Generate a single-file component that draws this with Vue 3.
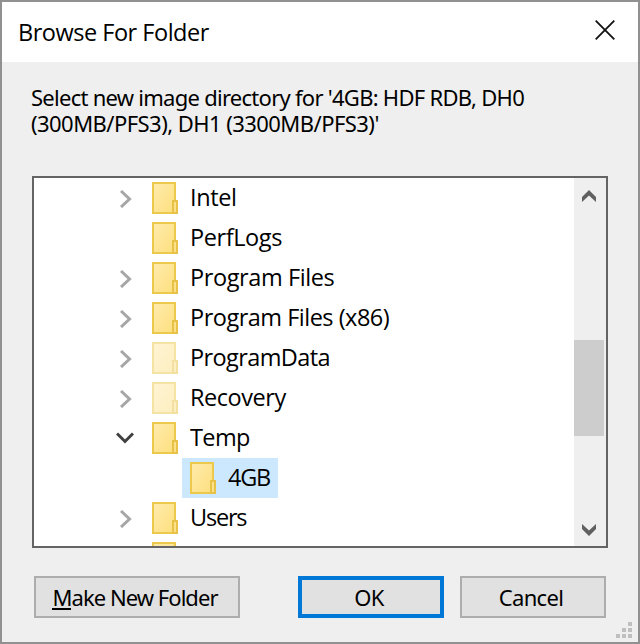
<script setup>
const rows = [
  { name: 'Intel', state: 'closed', spacing: -0.4 },
  { name: 'PerfLogs', state: 'leaf', spacing: -0.4 },
  { name: 'Program Files', state: 'closed', spacing: -0.4 },
  { name: 'Program Files (x86)', state: 'closed', spacing: -0.5 },
  { name: 'ProgramData', state: 'closed', hidden: true, spacing: -0.6 },
  { name: 'Recovery', state: 'closed', hidden: true, spacing: -0.45 },
  { name: 'Temp', state: 'open', spacing: -0.6 },
  { name: '4GB', state: 'leaf', child: true, spacing: -1.2 },
  { name: 'Users', state: 'closed', spacing: -1.2 },
  { name: '', state: 'leaf', spacing: 0 },
]
</script>

<template>
  <div class="dialog">
    <header class="titlebar">
      <span class="title">Browse For Folder</span>
      <svg class="close" width="20" height="20" viewBox="0 0 20 20"><path d="M.7 .7L19.3 19.3M19.3 .7L.7 19.3" /></svg>
    </header>
    <main class="body">
      <p class="message"><span class="first">Select new image directory for '4GB: HDF RDB, DH0</span><span class="second">(300MB/PFS3), DH1 (3300MB/PFS3)'</span></p>
      <div class="tree">
        <div class="rows">
          <div v-for="(row, i) in rows" :key="i" class="row" :class="{ child: row.child }">
            <span class="toggle">
              <svg v-if="row.state === 'closed'" class="closed" width="12" height="18" viewBox="0 0 12 18"><path d="M1 1L9.5 9L1 17" /></svg>
              <svg v-if="row.state === 'open'" class="open" width="18" height="12" viewBox="0 0 18 12"><path d="M1 1.5L9 9.5L17 1.5" /></svg>
            </span>
            <span class="item">
              <svg class="folder" :class="{ faded: row.hidden }" width="26" height="32" viewBox="0 0 26 32">
                <defs>
                  <linearGradient :id="'fill' + i" x1="0" y1="0" x2="1" y2="1">
                    <stop offset="0" stop-color="#ffebac" />
                    <stop offset="1" stop-color="#fddf7e" />
                  </linearGradient>
                </defs>
                <rect x="1" y="1" width="22" height="30" :fill="'url(#fill' + i + ')'" stroke="#ecc94b" stroke-width="2" />
                <rect x="21" y="19" width="4" height="12" fill="#fce18a" stroke="#e8c246" stroke-width="2" />
              </svg>
              <span class="name" :style="{ letterSpacing: row.spacing + 'px' }">{{ row.name }}</span>
            </span>
          </div>
        </div>
        <div class="scrollbar">
          <svg class="arrow" width="14" height="12" viewBox="0 0 14 12"><path d="M0 7L7 0L14 7V12L7 5.5L0 12Z" /></svg>
          <div class="thumb"></div>
          <svg class="arrow" width="14" height="12" viewBox="0 0 14 12"><path d="M0 0L7 6.5L14 0V5L7 12L0 5Z" /></svg>
        </div>
      </div>
      <footer class="actions">
        <button class="button make"><span><span class="key">M</span>ake New Folder</span></button>
        <button class="button ok"><span>OK</span></button>
        <button class="button cancel"><span>Cancel</span></button>
      </footer>
    </main>
    <svg class="grip" width="16" height="16" viewBox="0 0 16 16"><path d="M12 0h4v4h-4zM6 6h4v4H6zM12 6h4v4h-4zM0 12h4v4H0zM6 12h4v4H6zM12 12h4v4h-4z" /></svg>
  </div>
</template>

<style>
body { margin: 0; overflow: hidden; }
</style>

<style scoped>
.dialog {
  position: relative;
  box-sizing: border-box;
  width: 640px;
  height: 644px;
  border: 2px solid #919191;
  background: #efefef;
  color: #000;
  font-family: "Open Sans", "Noto Sans", sans-serif;
}
.titlebar {
  display: flex;
  align-items: center;
  justify-content: space-between;
  box-sizing: border-box;
  height: 60px;
  padding: 0 23px 4px 16px;
  background: #fff;
}
.title { font-size: 23.5px; line-height: 32px; white-space: pre; padding-top: 4px; letter-spacing: -.48px; }
.close path { fill: none; stroke: #111; stroke-width: 1.8; }
.body { padding: 22px 30px 0; }
.message {
  display: flex;
  flex-direction: column;
  align-items: flex-start;
  height: 92px;
  margin: 0 0 0 -1px;
  font-family: "Noto Sans", sans-serif;
  font-size: 22px;
  line-height: 26px;
  white-space: pre;
}
.first { letter-spacing: -.73px; }
.second { letter-spacing: -.55px; }
.tree {
  display: flex;
  box-sizing: border-box;
  width: 576px;
  height: 372px;
  border: 2px solid #646464;
  background: #fff;
  overflow: hidden;
}
.rows { flex: 1; overflow: hidden; }
.row { display: flex; height: 40px; padding-left: 79px; }
.toggle { display: flex; align-items: center; justify-content: center; width: 26px; height: 41px; }
.toggle path { fill: none; stroke-width: 3; }
.closed path { stroke: #a6a6a6; }
.open { margin: 0 2px 2px 0; flex: none; }
.open path { stroke: #404040; }
.item { display: flex; align-items: center; height: 40px; margin-left: 13px; }
.child .item { box-sizing: border-box; width: 96px; margin-left: 43px; padding: 0 8px; background: #cce8ff; }
.folder { flex: none; }
.faded { opacity: .5; }
.name { margin-left: 12px; font-size: 23.5px; line-height: 38px; padding-bottom: 2px; white-space: pre; }
.scrollbar {
  display: flex;
  flex-direction: column;
  align-items: center;
  justify-content: space-between;
  box-sizing: border-box;
  width: 32px;
  padding: 12px 2px 10px 0;
  background: #efefef;
}
.arrow path { fill: #606060; }
.thumb { width: 30px; height: 96px; margin-top: 138px; margin-bottom: 88px; background: #cdcdcd; }
.actions { display: flex; padding: 28px 2px 0; }
.button {
  display: flex;
  align-items: center;
  justify-content: center;
  box-sizing: border-box;
  width: 146px;
  height: 42px;
  padding: 0 4px 0 0;
  border: 2px solid #adadad;
  background: #e1e1e1;
  color: #000;
  font-family: "Noto Sans", sans-serif;
  font-size: 22px;
  line-height: 30px;
  letter-spacing: -.7px;
  white-space: pre;
}
.make { width: 206px; letter-spacing: -.95px; }
.ok { margin-left: 58px; border: 4px solid #0078d7; }
.cancel { margin-left: 16px; }
.key { border-bottom: 2px solid #000; display: inline-block; line-height: 22px; }
.grip { position: absolute; right: 6px; bottom: 4px; }
.grip path { fill: #bfbfbf; }
</style>
